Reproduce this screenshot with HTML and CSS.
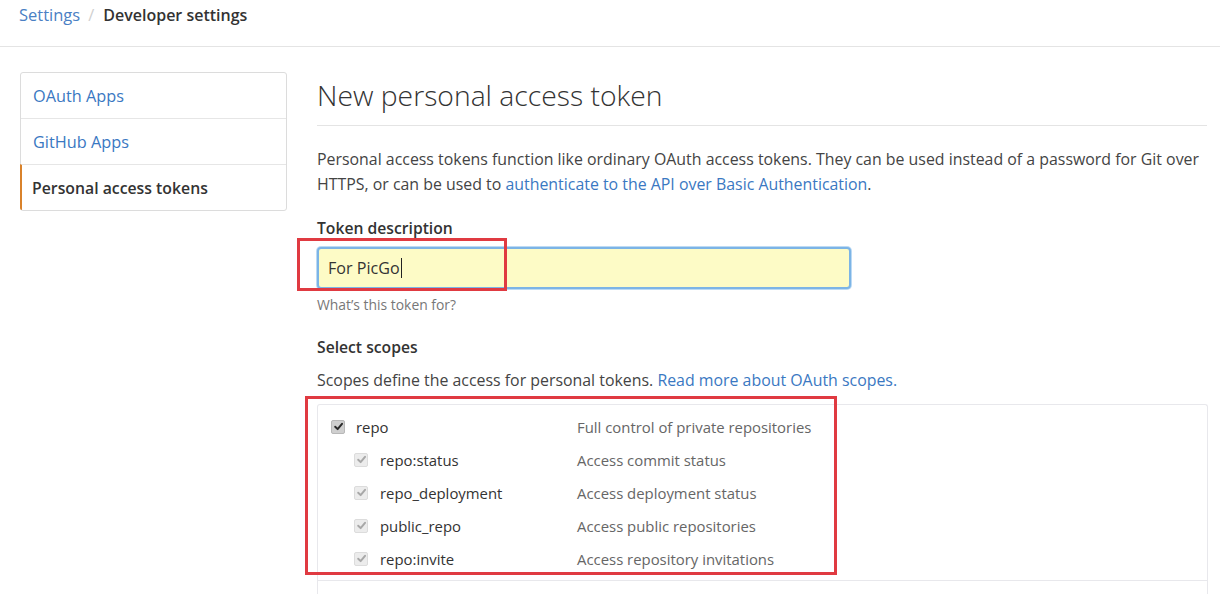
FILE: index.html
```html
<!DOCTYPE html>
<html lang="en">
<head>
<meta charset="utf-8">
<title>New personal access token</title>
<link rel="stylesheet" href="styles.css">
</head>
<body>
<header class="crumbs">
  <a class="crumb-link" href="#">Settings</a>
  <span class="crumb-sep">/</span>
  <span class="crumb-current">Developer settings</span>
</header>

<div class="layout">
  <nav class="menu">
    <a class="menu-item" href="#">OAuth Apps</a>
    <a class="menu-item" href="#">GitHub Apps</a>
    <a class="menu-item selected" href="#">Personal access tokens</a>
  </nav>

  <main class="main">
    <h1 class="title">New personal access token</h1>
    <p class="intro">Personal access tokens function like ordinary OAuth access tokens. They can be used instead of a password for Git over HTTPS, or can be used to <a href="#">authenticate to the API over Basic Authentication</a>.</p>

    <div class="field">
      <label class="field-label">Token description</label>
      <div class="input-wrap">
        <div class="input">For PicGo<span class="caret"></span></div>
        <span class="annot annot-input"></span>
      </div>
      <p class="note">What’s this token for?</p>
    </div>

    <div class="field">
      <label class="field-label">Select scopes</label>
      <p class="scopes-lead">Scopes define the access for personal tokens. <a href="#">Read more about OAuth scopes.</a></p>
      <div class="scopes">
        <div class="scope-group">
          <div class="scope-row parent">
            <span class="cb cb-dark"><svg viewBox="0 0 10 10"><path d="M2 5.2 L4.2 7.4 L8.2 2.6" /></svg></span>
            <span class="scope-name">repo</span>
            <span class="scope-desc">Full control of private repositories</span>
          </div>
          <div class="scope-row child">
            <span class="cb cb-light"><svg viewBox="0 0 10 10"><path d="M2 5.2 L4.2 7.4 L8.2 2.6" /></svg></span>
            <span class="scope-name">repo:status</span>
            <span class="scope-desc">Access commit status</span>
          </div>
          <div class="scope-row child">
            <span class="cb cb-light"><svg viewBox="0 0 10 10"><path d="M2 5.2 L4.2 7.4 L8.2 2.6" /></svg></span>
            <span class="scope-name">repo_deployment</span>
            <span class="scope-desc">Access deployment status</span>
          </div>
          <div class="scope-row child">
            <span class="cb cb-light"><svg viewBox="0 0 10 10"><path d="M2 5.2 L4.2 7.4 L8.2 2.6" /></svg></span>
            <span class="scope-name">public_repo</span>
            <span class="scope-desc">Access public repositories</span>
          </div>
          <div class="scope-row child">
            <span class="cb cb-light"><svg viewBox="0 0 10 10"><path d="M2 5.2 L4.2 7.4 L8.2 2.6" /></svg></span>
            <span class="scope-name">repo:invite</span>
            <span class="scope-desc">Access repository invitations</span>
          </div>
          <span class="annot annot-scopes"></span>
        </div>
        <div class="scope-group next"></div>
      </div>
    </div>
  </main>
</div>
</body>
</html>
```

FILE: styles.css
```css
* { box-sizing: border-box; }

html, body {
  margin: 0;
  padding: 0;
  background: #fff;
  overflow: hidden;
}

body {
  font-family: "Open Sans", "Noto Sans", sans-serif;
  font-size: 15.9px;
  color: #333;
  width: 1220px;
  height: 594px;
}

a { color: #3a78c2; text-decoration: none; }

.crumbs {
  height: 47px;
  border-bottom: 1px solid #e4e4e4;
  padding: 3px 0 0 19px;
  font-size: 16.5px;
  line-height: 24px;
  display: flex;
}
.crumb-link { color: #4a80c4; }
.crumb-sep { color: #d0d0d0; margin: 0 9px 0 8px; }
.crumb-current { color: #333; font-weight: 600; font-size: 16px; }

.layout {
  display: flex;
  gap: 30px;
  padding: 25px 0 0 20px;
}

.menu {
  width: 267px;
  flex: none;
  align-self: flex-start;
  border: 1px solid #dcdcdc;
  border-radius: 3px;
  display: flex;
  flex-direction: column;
}
.menu-item {
  height: 46px;
  display: flex;
  align-items: center;
  padding-left: 12px;
  font-size: 16.3px;
  color: #3a78c2;
  border-top: 1px solid #e6e6e6;
}
.menu-item:first-child { border-top: 0; height: 45px; }
.menu-item.selected {
  color: #333;
  font-weight: 600;
  font-size: 15.8px;
  border-left: 2px solid #d9822b;
  padding-left: 10px;
  margin-left: -1px;
  border-bottom-left-radius: 2px;
}

.main {
  width: 890px;
  flex: none;
}

.title {
  margin: 0;
  font-size: 28.3px;
  font-weight: 300;
  color: #333;
  line-height: 36px;
  padding: 5px 0 12px;
  border-bottom: 1px solid #e4e4e4;
}

.intro {
  margin: 21px 0 0;
  line-height: 25px;
  color: #444;
  width: 905px;
}

.field { margin-top: 20px; }
.field-label {
  display: block;
  font-weight: 600;
  font-size: 15.7px;
  line-height: 22px;
  color: #333;
}

.input-wrap { position: relative; margin-top: 8px; width: 534px; }
.input {
  height: 42px;
  border: 2px solid #7cb4e6;
  border-radius: 4px;
  background: #fdfbc6;
  box-shadow: 0 0 0 1px #bcdaf4;
  padding: 0 9px;
  display: flex;
  align-items: center;
  font-size: 16.1px;
  color: #333;
}
.caret {
  display: inline-block;
  width: 1px;
  height: 20px;
  background: #222;
  margin-left: 1px;
}

.annot {
  position: absolute;
  border: 3px solid #e03a41;
  pointer-events: none;
}
.annot-input { left: -20px; top: -9px; width: 210px; height: 53px; }
.annot-scopes { left: -13px; top: -9px; width: 532px; height: 179px; }

.note {
  margin: 7px 0 0;
  font-size: 13.9px;
  color: #777;
  line-height: 18px;
}

.field + .field { margin-top: 22px; }

.scopes-lead {
  margin: 10px 0 0;
  line-height: 24px;
  color: #444;
}

.scopes {
  margin-top: 12px;
  border: 1px solid #e8e8ec;
  border-bottom: 0;
  border-radius: 3px 3px 0 0;
  width: 891px;
}
.scope-group {
  position: relative;
  padding: 5px 0 5px;
}
.scope-group.next {
  border-top: 1px solid #e8e8ec;
  height: 40px;
}

.scope-row {
  display: grid;
  align-items: center;
  height: 33px;
  font-size: 14.9px;
}
.scope-row.parent {
  grid-template-columns: 25px 221px 1fr;
  padding-left: 13px;
}
.scope-row.child {
  grid-template-columns: 26px 197px 1fr;
  padding-left: 36px;
}
.scope-name { color: #333; }
.scope-row.parent .scope-name { font-weight: 500; }
.scope-desc { color: #666; }

.cb {
  width: 14px;
  height: 14px;
  border-radius: 2px;
  display: flex;
  align-items: center;
  justify-content: center;
}
.cb svg { width: 11px; height: 11px; }
.cb path { fill: none; stroke-width: 1.8; stroke-linecap: round; stroke-linejoin: round; }
.cb-dark { background: #cfcfcf; border: 1px solid #b8b8b8; }
.cb-dark path { stroke: #2a2a2a; }
.cb-light { background: #ececec; border: 1px solid #dcdcdc; }
.cb-light path { stroke: #a8a8a8; }
```
